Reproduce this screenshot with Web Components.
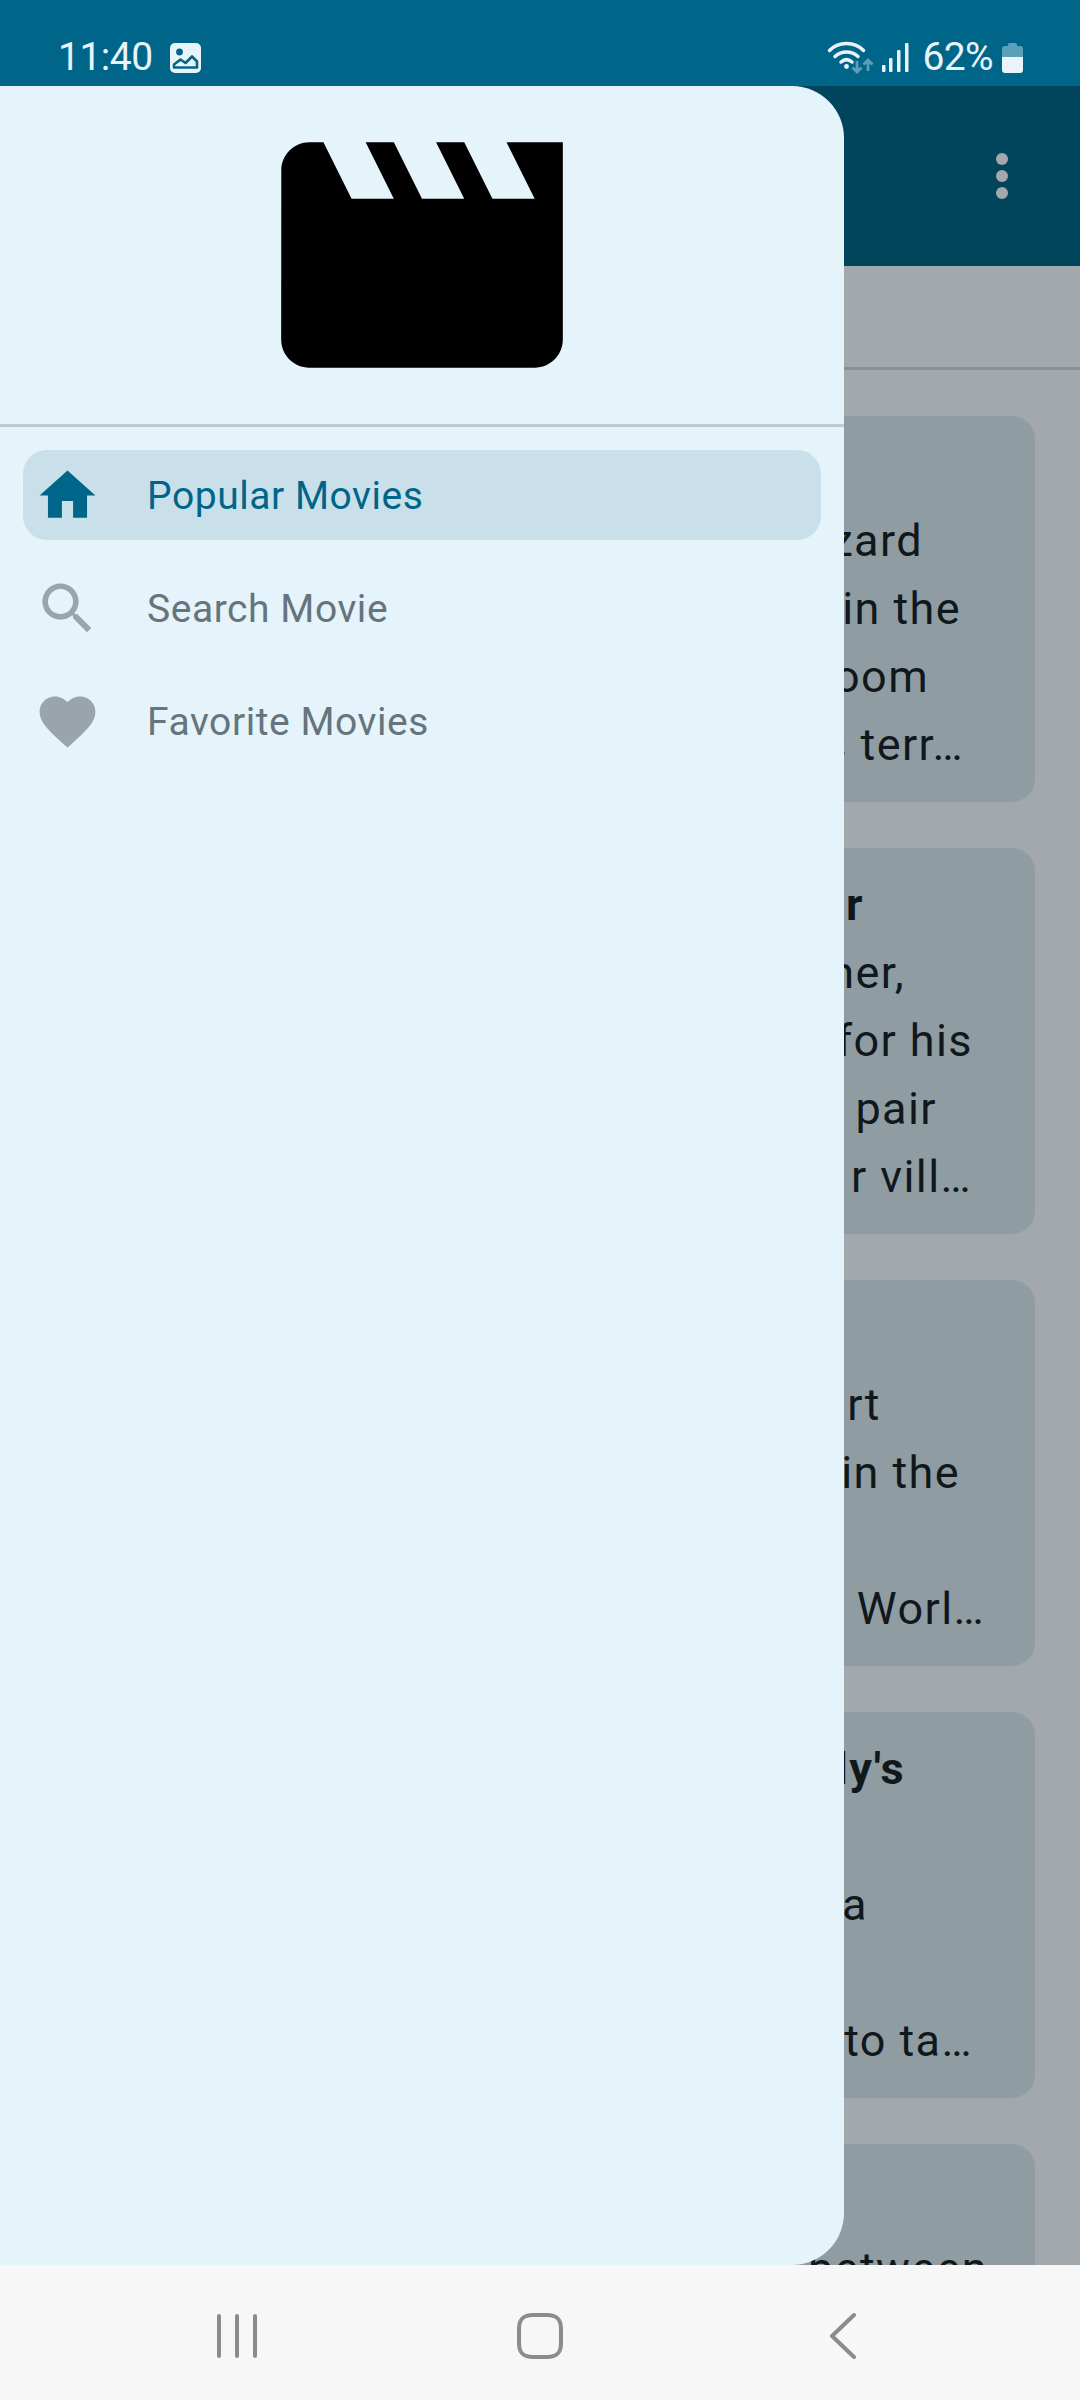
<!DOCTYPE html>
<html>
<head>
<meta charset="utf-8">
<title>Popular Movies</title>
<style>
html, body { margin: 0; height: 100%; }
body { font-family: Roboto, "Liberation Sans", sans-serif; }
</style>
</head>
<body>
<phone-screen>
  <status-bar slot="status" time="11:40" battery="62%"></status-bar>
  <app-bar slot="content"></app-bar>
  <movie-card slot="content" lines='[{"t":"","b":1},{"t":"zard","r":112},{"t":"in the","r":74},{"t":"oom","r":106},{"t":"s terr…","r":71}]'></movie-card>
  <movie-card slot="content" lines='[{"t":"r","b":1,"r":171},{"t":"her,","r":130},{"t":"for his","r":62},{"t":"pair","r":98},{"t":"r vill…","r":63}]'></movie-card>
  <movie-card slot="content" lines='[{"t":"","b":1},{"t":"rt","r":154},{"t":"in the","r":75},{"t":""},{"t":"Worl…","r":50}]'></movie-card>
  <movie-card slot="content" lines='[{"t":"ly&#39;s","b":1,"r":130},{"t":""},{"t":"a","r":167},{"t":""},{"t":"to ta…","r":62}]'></movie-card>
  <movie-card slot="content" lines='[{"t":"","b":1},{"t":"between","r":47},{"t":""},{"t":""},{"t":""}]'></movie-card>
  <nav-drawer slot="drawer">
    <drawer-item active label="Popular Movies" icon="home"></drawer-item>
    <drawer-item label="Search Movie" icon="search"></drawer-item>
    <drawer-item label="Favorite Movies" icon="favorite"></drawer-item>
  </nav-drawer>
  <nav-buttons slot="nav"></nav-buttons>
</phone-screen>

<script>
// material icon paths, 24 unit grid
const ICONS = {
    home: "M10 20v-6h4v6h5v-8h3L12 3 2 12h3v8z",
    search: "M15.5 14h-.79l-.28-.27C15.41 12.59 16 11.11 16 9.5 16 5.91 13.09 3 9.5 3S3 5.91 3 9.5 5.91 16 9.5 16c1.61 0 3.09-.59 4.23-1.57l.27.28v.79l5 4.99L20.49 19l-4.99-5zm-6 0C7.01 14 5 11.99 5 9.5S7.01 5 9.5 5 14 7.01 14 9.5 11.99 14 9.5 14z",
    favorite: "M12 21.35l-1.45-1.32C5.4 15.36 2 12.28 2 8.5 2 5.42 4.42 3 7.5 3c1.74 0 3.41.81 4.5 2.09C13.09 3.81 14.76 3 16.5 3 19.58 3 22 5.42 22 8.5c0 3.78-3.4 6.86-8.55 11.54L12 21.35z",
    movie: "M18 4l2 4h-3l-2-4h-2l2 4h-3l-2-4H8l2 4H7L5 4H4c-1.1 0-1.99.9-1.99 2L2 18c0 1.1.9 2 2 2h16c1.1 0 2-.9 2-2V4h-4z"
};

class Base extends HTMLElement {
    render(html) {
        this.attachShadow({ mode: "open" }).innerHTML = html;
    }
}

customElements.define("phone-screen", class extends Base {
    connectedCallback() {
        this.render(`<style>
            :host { display: flex; flex-direction: column; width: 1080px; height: 2400px; overflow: hidden; }
            .body { position: relative; flex: 1; overflow: hidden; background: #a3a8ac; min-height: 0; }
            .content { display: flex; flex-direction: column; }
        </style>
        <slot name="status"></slot>
        <div class="body">
            <div class="content"><slot name="content"></slot></div>
            <slot name="drawer"></slot>
        </div>
        <slot name="nav"></slot>`);
    }
});

customElements.define("status-bar", class extends Base {
    connectedCallback() {
        this.render(`<style>
            :host { display: flex; align-items: flex-start; height: 86px; flex: none; box-sizing: border-box; padding: 0 57px 0 58px; background: #006689; color: #e8f4fa; font-size: 39px; }
            .time { margin-top: 34px; line-height: 47px; letter-spacing: -.5px; }
            .pic { margin: 43px 0 0 17px; }
            .right { margin-left: auto; display: flex; align-items: flex-start; }
            .pct { margin: 34px 0 0 12px; line-height: 47px; letter-spacing: -.6px; }
            svg { display: block; }
        </style>
        <span class="time">${this.getAttribute("time")}</span>
        <svg class="pic" width="31" height="30" viewBox="0 0 31 30">
            <rect width="31" height="30" rx="5" fill="#e8f4fa"/>
            <circle cx="9.500" cy="9" r="3.400" fill="#006689"/>
            <path d="M4 24.500v-3l6.500-5 5 3.500 6.500-6.500 5 5v6z" fill="none" stroke="#006689" stroke-width="2.600" stroke-linejoin="round"/>
        </svg>
        <div class="right">
            <svg style="margin-top:41px" width="50" height="34" viewBox="0 0 50 34">
                <g fill="none" stroke="#e8f4fa" stroke-width="3.500" stroke-linecap="round">
                    <path d="M3.500 9.500C12 0 29 0 37.500 9.500"/>
                    <path d="M9 15.500c6.500-6 16.500-6 23 0"/>
                    <path d="M15 21c3.500-3 7.500-3 11 0"/>
                </g>
                <circle cx="20.500" cy="25.500" r="2.400" fill="#e8f4fa"/>
                <g fill="none" stroke="#5c9fb9" stroke-width="2.800">
                    <path d="M31 20v11M26.500 26.500l4.500 4.500 4.500-4.500"/>
                    <path d="M42 30V19M37.500 23.500l4.500-4.500 4.500 4.500"/>
                </g>
            </svg>
            <svg style="margin:43px 0 0 5px" width="29" height="30" viewBox="0 0 29 30" fill="#e8f4fa">
                <rect x="1" y="22" width="3.500" height="7" rx="1"/>
                <rect x="8" y="15" width="3.500" height="14" rx="1"/>
                <rect x="16" y="7" width="3.500" height="22" rx="1"/>
                <rect x="24" y="0" width="3.500" height="29" rx="1"/>
            </svg>
            <span class="pct">${this.getAttribute("battery")}</span>
            <svg style="margin:42px 0 0 9px" width="21" height="31" viewBox="0 0 21 31">
                <path d="M6 4V2.500C6 1.500 7 1 8 1h5c1 0 2 .5 2 1.500V4h3c2 0 3 1 3 3v8H0V7c0-2 1-3 3-3z" fill="#5c9fb9"/>
                <path d="M0 15h21v13c0 2-1 3-3 3H3c-2 0-3-1-3-3z" fill="#e8f4fa"/>
            </svg>
        </div>`);
    }
});

customElements.define("app-bar", class extends Base {
    connectedCallback() {
        this.render(`<style>
            :host { display: block; margin-bottom: 46px; }
            .bar { height: 180px; background: #00455c; display: flex; align-items: center; justify-content: flex-end; padding-right: 72px; }
            .dots { display: flex; flex-direction: column; gap: 5px; }
            .dots i { width: 12px; height: 12px; border-radius: 50%; background: #a3a8ac; }
            .tabs { height: 101px; border-bottom: 3px solid #899094; }
        </style>
        <div class="bar"><div class="dots"><i></i><i></i><i></i></div></div>
        <div class="tabs"></div>`);
    }
});

customElements.define("movie-card", class extends Base {
    connectedCallback() {
        let rows = JSON.parse(this.getAttribute("lines"));
        this.render(`<style>
            :host { display: block; flex: none; margin: 0 45px 46px 0; }
            .card { height: 386px; box-sizing: border-box; padding: 23px 0; background: #8f9da3; border-radius: 0 23px 23px 0; color: #11181c; font-size: 45px; letter-spacing: 1.4px; line-height: 68px; }
            .ln { height: 68px; text-align: right; white-space: nowrap; }
            .b { font-weight: 700; }
        </style>
        <div class="card">${rows.map(r => `<div class="ln ${r.b ? "b" : ""}" style="padding-right:${r.r || 0}px">${r.t}</div>`).join("")}</div>`);
    }
});

customElements.define("nav-drawer", class extends Base {
    connectedCallback() {
        this.render(`<style>
            :host { position: absolute; left: 0; top: 0; bottom: 0; width: 844px; display: flex; flex-direction: column; background: #e5f3fa; border-radius: 0 52px 52px 0; }
            header { height: 338px; display: flex; justify-content: center; border-bottom: 3px solid #bccad1; }
            header svg { width: 338px; height: 338px; display: block; }
            nav { display: flex; flex-direction: column; gap: 23px; padding: 23px; }
        </style>
        <header><svg viewBox="0 0 24 24"><path d="${ICONS.movie}"/></svg></header>
        <nav><slot></slot></nav>`);
    }
});

customElements.define("drawer-item", class extends Base {
    connectedCallback() {
        let active = this.hasAttribute("active");
        this.render(`<style>
            :host { display: flex; align-items: center; height: 90px; border-radius: 24px; padding-left: 11px; font-size: 39px; letter-spacing: .55px;
                color: ${active ? "#006689" : "#66747c"}; background: ${active ? "#c9e0eb" : "transparent"}; }
            svg { width: 67px; height: 67px; flex: none; margin-right: 46px; fill: ${active ? "#006689" : "#9aa5ab"}; }
            span { padding-top: 2px; }
        </style>
        <svg viewBox="0 0 24 24"><path d="${ICONS[this.getAttribute("icon")]}"/></svg>
        <span>${this.getAttribute("label")}</span>`);
    }
});

customElements.define("nav-buttons", class extends Base {
    connectedCallback() {
        this.render(`<style>
            :host { display: flex; justify-content: center; align-items: center; height: 135px; flex: none; box-sizing: border-box; padding-top: 6px; background: #f7f7f7; }
            div { width: 303px; display: flex; justify-content: center; }
            svg { display: block; fill: none; stroke: #8c8c8c; stroke-width: 4; stroke-linecap: round; stroke-linejoin: round; }
        </style>
        <div><svg width="40" height="44" viewBox="0 0 40 44"><path d="M2 2v40M20 2v40M38 2v40"/></svg></div>
        <div><svg width="46" height="46" viewBox="0 0 46 46"><path d="M16 2h14c10 0 14 4 14 14v14c0 10-4 14-14 14H16C6 44 2 40 2 30V16C2 6 6 2 16 2z"/></svg></div>
        <div><svg width="28" height="46" viewBox="0 0 28 46"><path d="M25 2L3 23l22 21"/></svg></div>`);
    }
});
</script>
</body>
</html>
